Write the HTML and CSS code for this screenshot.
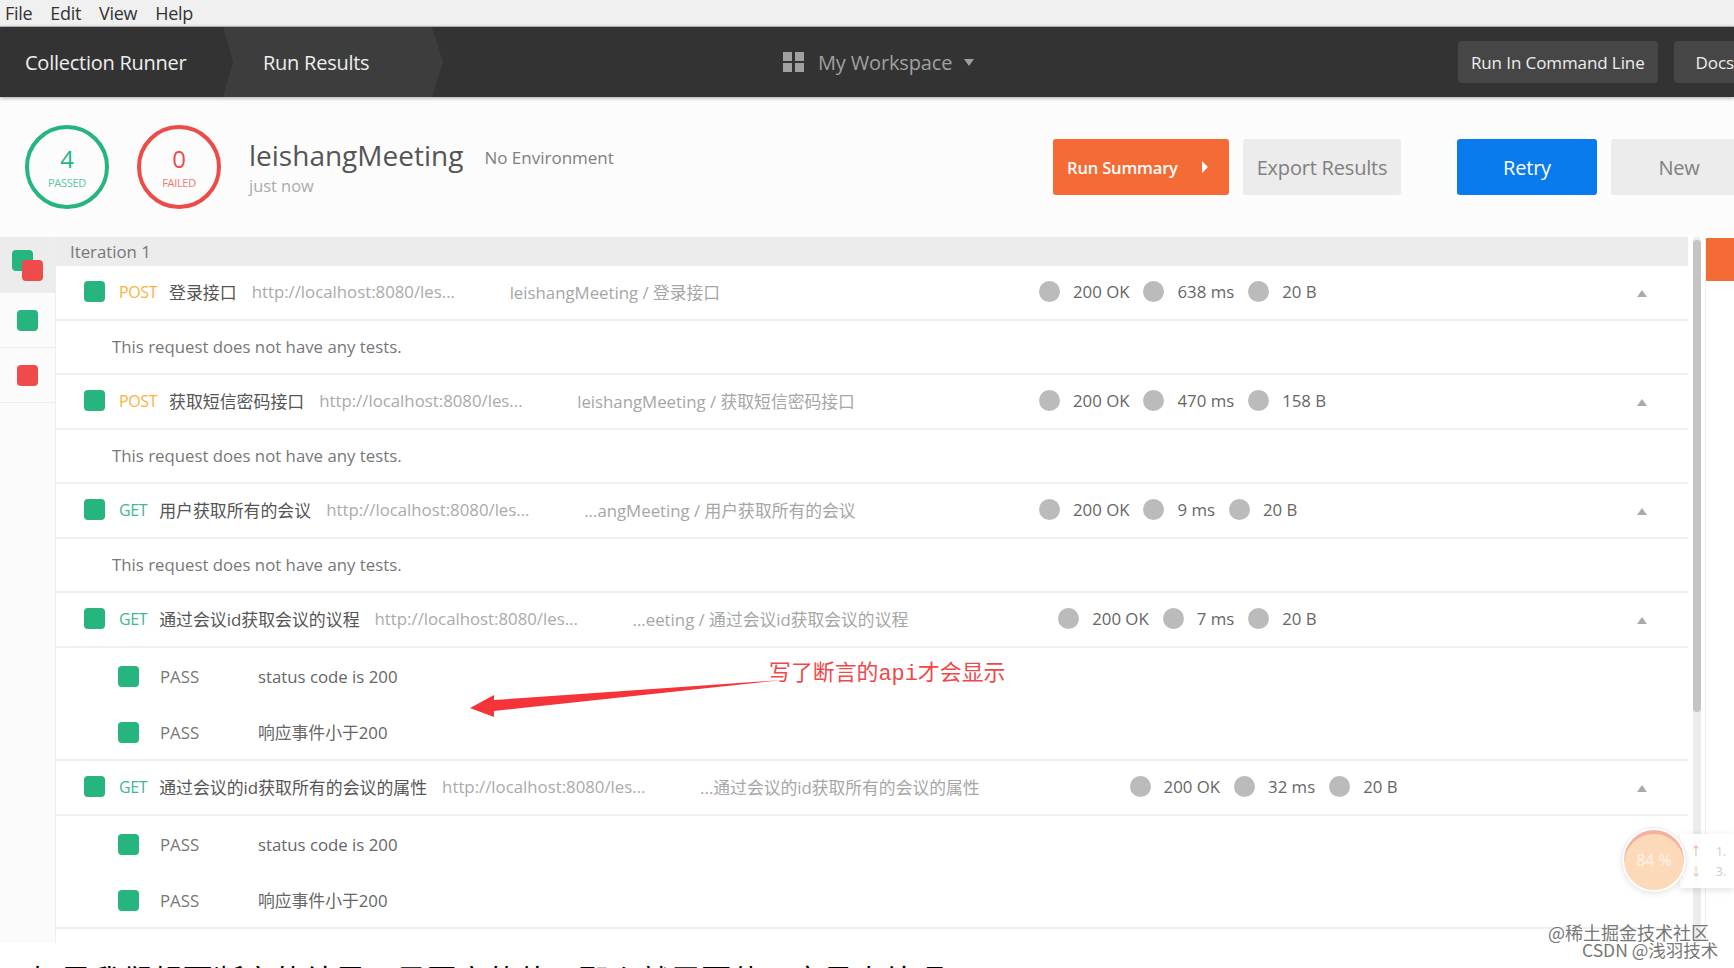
FILE: index.html
```html
<!DOCTYPE html>
<html lang="zh-CN">
<head>
    <meta charset="UTF-8" />
    <meta name="viewport" content="width=device-width, initial-scale=1" />
    <title>Collection Runner</title>
    <link rel="stylesheet" href="styles.css">
</head>
<body>
    <nav class="menubar">
        <span>File</span>
        <span>Edit</span>
        <span>View</span>
        <span>Help</span>
    </nav>

    <header class="toolbar">
        <div class="crumb crumb-first">Collection Runner</div>
        <div class="crumb crumb-second">Run Results</div>
        <div class="workspace">
            <span class="ws-icon"><i></i><i></i><i></i><i></i></span>
            <span>My Workspace</span>
            <span class="ws-caret"></span>
        </div>
        <div class="toolbar-actions">
            <span class="tool-btn">Run In Command Line</span>
            <span class="tool-btn tool-docs">Docs</span>
        </div>
    </header>

    <section class="summary">
        <div class="ring ring-pass">
            <span class="ring-num">4</span>
            <span class="ring-label">PASSED</span>
        </div>
        <div class="ring ring-fail">
            <span class="ring-num">0</span>
            <span class="ring-label">FAILED</span>
        </div>
        <div class="run-info">
            <div class="run-title">
                <span class="run-name">leishangMeeting</span>
                <span class="run-env">No Environment</span>
            </div>
            <div class="run-time">just now</div>
        </div>
        <div class="run-actions">
            <span class="btn btn-orange">Run Summary <span class="btn-caret"></span></span>
            <span class="btn btn-grey btn-export">Export Results</span>
            <span class="btn btn-blue">Retry</span>
            <span class="btn btn-grey btn-new">New</span>
        </div>
    </section>

    <main class="runner">
        <aside class="sidebar">
            <div class="side-cell side-all">
                <span class="sq sq-green side-back"></span>
                <span class="sq sq-red side-front"></span>
            </div>
            <div class="side-cell"><span class="sq sq-green"></span></div>
            <div class="side-cell"><span class="sq sq-red"></span></div>
        </aside>

        <div class="results">
            <div class="iteration">Iteration 1</div>

            <!-- POST 登录接口 -->
            <div class="req">
                <div class="req-main">
                    <span class="sq sq-green"></span>
                    <span class="method method-post">POST</span>
                    <span class="req-name">登录接口</span>
                    <span class="req-url">http://localhost:8080/les...</span>
                    <span class="req-path">leishangMeeting / 登录接口</span>
                </div>
                <div class="req-stats">
                    <i class="dot"></i><span>200 OK</span>
                    <i class="dot"></i><span>638 ms</span>
                    <i class="dot"></i><span>20 B</span>
                </div>
                <span class="collapse"></span>
            </div>
            <div class="no-tests">This request does not have any tests.</div>

            <div class="req">
                <div class="req-main">
                    <span class="sq sq-green"></span>
                    <span class="method method-post">POST</span>
                    <span class="req-name">获取短信密码接口</span>
                    <span class="req-url">http://localhost:8080/les...</span>
                    <span class="req-path">leishangMeeting / 获取短信密码接口</span>
                </div>
                <div class="req-stats">
                    <i class="dot"></i><span>200 OK</span>
                    <i class="dot"></i><span>470 ms</span>
                    <i class="dot"></i><span>158 B</span>
                </div>
                <span class="collapse"></span>
            </div>
            <div class="no-tests">This request does not have any tests.</div>

            <div class="req">
                <div class="req-main">
                    <span class="sq sq-green"></span>
                    <span class="method method-get">GET</span>
                    <span class="req-name">用户获取所有的会议</span>
                    <span class="req-url">http://localhost:8080/les...</span>
                    <span class="req-path">...angMeeting / 用户获取所有的会议</span>
                </div>
                <div class="req-stats">
                    <i class="dot"></i><span>200 OK</span>
                    <i class="dot"></i><span>9 ms</span>
                    <i class="dot"></i><span>20 B</span>
                </div>
                <span class="collapse"></span>
            </div>
            <div class="no-tests">This request does not have any tests.</div>

            <div class="req">
                <div class="req-main">
                    <span class="sq sq-green"></span>
                    <span class="method method-get">GET</span>
                    <span class="req-name">通过会议id获取会议的议程</span>
                    <span class="req-url">http://localhost:8080/les...</span>
                    <span class="req-path">...eeting / 通过会议id获取会议的议程</span>
                </div>
                <div class="req-stats">
                    <i class="dot"></i><span>200 OK</span>
                    <i class="dot"></i><span>7 ms</span>
                    <i class="dot"></i><span>20 B</span>
                </div>
                <span class="collapse"></span>
            </div>
            <div class="tests">
                <div class="test"><span class="sq sq-green"></span><span class="test-state">PASS</span><span class="test-name">status code is 200</span></div>
                <div class="test"><span class="sq sq-green"></span><span class="test-state">PASS</span><span class="test-name">响应事件小于200</span></div>
            </div>

            <div class="req">
                <div class="req-main">
                    <span class="sq sq-green"></span>
                    <span class="method method-get">GET</span>
                    <span class="req-name">通过会议的id获取所有的会议的属性</span>
                    <span class="req-url">http://localhost:8080/les...</span>
                    <span class="req-path">...通过会议的id获取所有的会议的属性</span>
                </div>
                <div class="req-stats">
                    <i class="dot"></i><span>200 OK</span>
                    <i class="dot"></i><span>32 ms</span>
                    <i class="dot"></i><span>20 B</span>
                </div>
                <span class="collapse"></span>
            </div>
            <div class="tests">
                <div class="test"><span class="sq sq-green"></span><span class="test-state">PASS</span><span class="test-name">status code is 200</span></div>
                <div class="test"><span class="sq sq-green"></span><span class="test-state">PASS</span><span class="test-name">响应事件小于200</span></div>
            </div>
        </div>

        <div class="scroll-track"><div class="scroll-thumb"></div></div>
        <div class="right-strip"><div class="right-flag"></div></div>
    </main>

    <p class="cut-line">如果我们想要断言的结果不是固定的值，那么就需要使用变量来处理</p>

    <!-- 标注 -->
    <svg class="note-arrow" width="330" height="60" viewBox="0 0 330 60">
        <polygon points="10,38 34,25 34,30 322,10 34,41 34,47" fill="#f5343a" />
    </svg>
    <div class="note-text">写了断言的api才会显示</div>

    <!-- 悬浮球 -->
    <div class="float-panel">
        <div><span class="up">↑</span><span>1.</span></div>
        <div><span>↓</span><span>3.</span></div>
    </div>
    <div class="float-ball">84 %</div>

    <div class="mark mark-one">@稀土掘金技术社区</div>
    <div class="mark mark-two">CSDN @浅羽技术</div>
</body>
</html>
```

FILE: styles.css
```css
* {
    box-sizing: border-box;
}
html, body {
    margin: 0;
    height: 100%;
}
body {
    position: relative;
    width: 1734px;
    height: 968px;
    overflow: hidden;
    background: #fff;
    font-family: "Open Sans", "Noto Sans CJK SC", sans-serif;
    font-size: 16.8px;
    color: #777;
}

/* menu */
.menubar {
    height: 27px;
    background: #f0f0f0;
    border-bottom: 1px solid #bbb;
    display: flex;
    align-items: center;
    gap: 18px;
    padding-left: 5px;
    font-size: 18px;
    letter-spacing: -0.3px;
    color: #333;
}

/* dark toolbar */
.toolbar {
    position: relative;
    z-index: 1;
    height: 70px;
    background: #333;
    box-shadow: 0 1px 4px rgba(0, 0, 0, .35);
    display: flex;
    align-items: center;
    color: #eee;
    font-size: 20px;
    letter-spacing: -0.25px;
    overflow: hidden;
}
.crumb {
    height: 100%;
    display: flex;
    align-items: center;
}
.crumb-first {
    width: 223px;
    padding-left: 25px;
}
.crumb-second {
    width: 220px;
    padding-left: 40px;
    background: #3d3d3d;
    clip-path: polygon(0 0, 209px 0, 100% 50%, 209px 100%, 0 100%, 10px 50%);
}
.workspace {
    margin-left: 340px;
    display: flex;
    align-items: center;
    color: #a0a0a0;
    font-size: 20px;
    letter-spacing: -0.15px;
}
.ws-icon {
    width: 21px;
    height: 20px;
    margin-right: 14px;
    display: grid;
    grid-template-columns: 1fr 1fr;
    gap: 2px 3px;
}
.ws-icon i {
    background: #a0a0a0;
}
.ws-caret {
    margin-left: 12px;
    border: 5px solid transparent;
    border-top: 7px solid #a0a0a0;
    border-bottom: 0;
}
.toolbar-actions {
    margin-left: auto;
    margin-right: -24px;
    display: flex;
    gap: 16px;
}
.tool-btn {
    height: 42px;
    padding: 0 13px;
    background: #464646;
    border-radius: 4px;
    display: flex;
    align-items: center;
    font-size: 17px;
    letter-spacing: -0.1px;
}
.tool-docs {
    padding: 0 24px 0 22px;
}

/* run summary */
.summary {
    height: 140px;
    background: #fcfcfc;
    display: flex;
    align-items: center;
    padding-left: 25px;
}
.ring {
    width: 84px;
    height: 84px;
    flex: none;
    margin-right: 28px;
    border: 4px solid;
    border-radius: 50%;
    display: flex;
    flex-direction: column;
    align-items: center;
    justify-content: center;
}
.ring-pass {
    border-color: #26b47f;
    color: #26b47f;
}
.ring-fail {
    border-color: #ed4b48;
    color: #ed4b48;
}
.ring-num {
    font-size: 24px;
    line-height: 28px;
}
.ring-label {
    margin-top: 3px;
    font-size: 11px;
    line-height: 14px;
    opacity: .75;
    letter-spacing: -0.3px;
}
.run-info {
    width: 804px;
    flex: none;
}
.run-title {
    display: flex;
    align-items: baseline;
}
.run-name {
    font-size: 28px;
    line-height: 36px;
    color: #555;
}
.run-env {
    position: relative;
    top: -2px;
    margin-left: 21px;
    font-size: 17px;
    color: #808080;
}
.run-time {
    padding-top: 2px;
    font-size: 16.4px;
    line-height: 22px;
    color: #aaa;
}
.run-actions {
    display: flex;
    flex: none;
}
.btn {
    height: 56px;
    border-radius: 3px;
    display: flex;
    align-items: center;
    justify-content: center;
    font-size: 20px;
    letter-spacing: -0.2px;
}
.btn-orange {
    width: 176px;
    justify-content: flex-start;
    padding-left: 14px;
    background: #f46b36;
    color: #fff;
    font-size: 16.6px;
    font-weight: 600;
}
.btn-caret {
    margin-left: 24px;
    border: 6px solid transparent;
    border-left: 6px solid #fff;
    border-right: 0;
}
.btn-grey {
    background: #ececec;
    color: #808080;
}
.btn-export {
    width: 158px;
    margin-left: 14px;
}
.btn-blue {
    width: 140px;
    margin-left: 56px;
    background: #097bed;
    color: #fff;
}
.btn-new {
    width: 136px;
    margin-left: 14px;
    flex: none;
    border-radius: 3px 0 0 3px;
}

/* runner area */
.runner {
    display: flex;
    height: 706px;
}
.sidebar {
    width: 56px;
    flex: none;
    background: #fbfbfb;
    border-right: 1px solid #eee;
}
.side-cell {
    position: relative;
    height: 55px;
    border-bottom: 1px solid #eee;
    display: flex;
    align-items: center;
    justify-content: center;
}
.side-all {
    height: 56px;
    background: #ececec;
    border-bottom: 0;
}
.sq {
    display: block;
    flex: none;
    width: 21px;
    height: 21px;
    border-radius: 4px;
}
.sq-green {
    background: #26b47f;
}
.sq-red {
    background: #f04b4b;
}
.side-back {
    position: absolute;
    left: 12px;
    top: 13px;
}
.side-front {
    position: absolute;
    left: 22px;
    top: 23px;
}
.results {
    width: 1632px;
    flex: none;
}
.iteration {
    height: 29px;
    margin-left: -56px;
    padding-left: 70px;
    background: #ececec;
    line-height: 29px;
    position: relative;
    clip-path: inset(0 0 0 56px);
}
.req {
    position: relative;
    height: 55px;
    border-bottom: 2px solid #f0f0f0;
    padding: 0 0 2px 28px;
    display: flex;
    align-items: center;
}
.req-main {
    min-width: 955px;
    display: flex;
    align-items: center;
}
.method {
    margin-left: 14px;
    margin-right: 12px;
    font-size: 16px;
    letter-spacing: -0.4px;
}
.method-post {
    color: #f9b340;
}
.method-get {
    color: #3dba8c;
}
.req-name {
    color: #555;
    font-size: 16.9px;
    margin-right: 15px;
    white-space: nowrap;
}
.req-url {
    width: 258px;
    flex: none;
    color: #aaa;
    white-space: nowrap;
}
.req-path {
    color: #a6a6a6;
    margin-right: 150px;
    white-space: nowrap;
}
.req-stats {
    display: flex;
    align-items: center;
    gap: 13px;
    color: #666;
}
.req-stats span {
    margin-right: 1px;
}
.dot {
    width: 21px;
    height: 21px;
    border-radius: 50%;
    background: #bbb;
}
.collapse {
    position: absolute;
    left: 1581px;
    top: 24px;
    border: 5px solid transparent;
    border-bottom: 7px solid #aaa;
    border-top: 0;
}
.no-tests {
    height: 54px;
    border-bottom: 2px solid #f0f0f0;
    padding-left: 56px;
    line-height: 52px;
}
.tests {
    height: 113px;
    border-bottom: 2px solid #f0f0f0;
}
.test {
    height: 56px;
    padding-left: 62px;
    display: flex;
    align-items: center;
}
.test-state {
    width: 98px;
    margin-left: 21px;
    flex: none;
}
.test-name {
    color: #666;
}

/* scrollbar and the right strip */
.scroll-track {
    width: 8px;
    margin-left: 5px;
    flex: none;
    background: #ececec;
    border-radius: 4px;
}
.scroll-thumb {
    height: 472px;
    margin-top: 3px;
    background: #c4c4c4;
    border-radius: 4px;
}
.right-strip {
    margin-left: 4px;
    flex: 1;
    border-left: 1px solid #eee;
}
.right-flag {
    height: 43px;
    margin-top: 1px;
    background: #f46b36;
}

/* clipped line of the article under the screenshot */
.cut-line {
    margin: 0;
    padding: 17px 0 0 30px;
    font-size: 30.5px;
    line-height: 40px;
    color: #000;
    white-space: nowrap;
}

/* things lying on top */
.note-arrow {
    position: absolute;
    left: 460px;
    top: 670px;
}
.note-text {
    position: absolute;
    left: 769px;
    top: 659px;
    font-family: "Liberation Mono", "Noto Sans CJK SC", monospace;
    font-size: 21.9px;
    line-height: 32px;
    color: #f0474a;
    white-space: nowrap;
}
.float-panel {
    position: absolute;
    left: 1680px;
    top: 834px;
    width: 54px;
    height: 54px;
    padding: 8px 0 0 10px;
    background: rgba(255, 255, 255, .9);
    box-shadow: 0 2px 8px rgba(0, 0, 0, .12);
    font-size: 12px;
    line-height: 20px;
    color: #ccc;
}
.float-panel span + span {
    margin-left: 14px;
}
.float-panel .up {
    color: #f3a6a6;
}
.float-ball {
    position: absolute;
    left: 1622px;
    top: 828px;
    width: 64px;
    height: 64px;
    border-radius: 50%;
    border: 2px solid #fff;
    outline: 1px solid #eee;
    background: #fcd9b8;
    box-shadow: inset 0 4px 0 #f4b0a0, 0 2px 6px rgba(0, 0, 0, .1);
    color: #fff4ea;
    font-size: 16px;
    text-align: center;
    line-height: 60px;
}
.mark {
    position: absolute;
    font-family: "Noto Sans CJK SC", sans-serif;
    font-size: 18px;
    line-height: 16px;
    color: #777;
    white-space: nowrap;
}
.mark-one {
    left: 1548px;
    top: 924px;
}
.mark-two {
    left: 1582px;
    top: 942px;
    font-size: 17.5px;
}
```
